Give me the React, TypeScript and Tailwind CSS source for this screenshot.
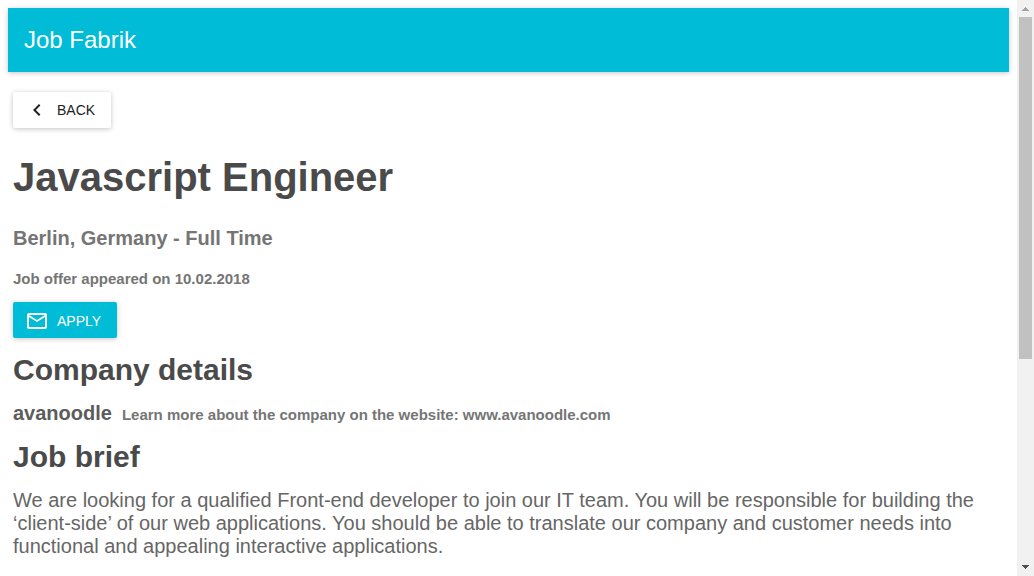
import type { ReactNode } from "react";

function AppBar() {
  return (
    <header className="flex h-16 items-center bg-[#00bcd7] px-4 text-white shadow-[0_1px_6px_rgba(0,0,0,0.12),0_1px_4px_rgba(0,0,0,0.12)]">
      <span className="text-2xl">Job Fabrik</span>
    </header>
  );
}

function SectionTitle({ children }: { children: ReactNode }) {
  return <h2 className="text-[30px] leading-9 font-bold text-[#4a4a4a]">{children}</h2>;
}

function ScrollRail() {
  return (
    <div aria-hidden="true" className="sticky top-0 flex h-screen w-[17px] shrink-0 flex-col items-center bg-[#f1f1f1]">
      <svg className="h-[17px] w-[17px] shrink-0" viewBox="0 0 17 17" fill="#a3a3a3" shapeRendering="crispEdges">
        <path d="M8 7h1v1h1v1h1v1h1v1H5v-1h1V9h1V8h1z" />
      </svg>
      <div className="w-[13px] grow-[342] basis-0 bg-[#c1c1c1]" />
      <div className="grow-[200] basis-0" />
      <svg className="h-[17px] w-[17px] shrink-0" viewBox="0 0 17 17" fill="#505050" shapeRendering="crispEdges">
        <path d="M5 6h7v1h-1v1h-1v1H9v1H8V9H7V8H6V7H5z" />
      </svg>
    </div>
  );
}

export default function App() {
  return (
    <div className="flex min-h-screen items-start bg-white font-['Liberation_Sans',Arial,sans-serif]">
      <div className="min-w-0 flex-1 p-2">
        <AppBar />
        <main className="flex flex-col items-start px-[5px] pt-5">
          <button
            type="button"
            className="flex h-9 items-center gap-2 rounded-xs bg-white pr-4 pl-3 text-sm text-[#212121] uppercase shadow-[0_1px_6px_rgba(0,0,0,0.12),0_1px_4px_rgba(0,0,0,0.12)]"
          >
            <svg className="size-6" viewBox="0 0 24 24" fill="currentColor" aria-hidden="true">
              <path d="M15.41 7.41L14 6l-6 6 6 6 1.41-1.41L10.83 12z" />
            </svg>
            Back
          </button>
          <h1 className="mt-6 text-[40px] leading-[50px] font-bold text-[#4a4a4a]">Javascript Engineer</h1>
          <p className="mt-[22px] text-xl leading-7 font-bold text-[#757575]">Berlin, Germany - Full Time</p>
          <p className="mt-4 text-[15px] leading-[22px] font-bold text-[#757575]">Job offer appeared on 10.02.2018</p>
          <button
            type="button"
            className="mt-3 flex h-9 items-center gap-2 rounded-xs bg-[#00bcd7] pt-0.5 pr-4 pl-3 text-sm text-white uppercase shadow-[0_1px_6px_rgba(0,0,0,0.12),0_1px_4px_rgba(0,0,0,0.12)]"
          >
            <svg className="size-6" viewBox="0 0 24 24" fill="currentColor" aria-hidden="true">
              <path d="M20 4H4c-1.1 0-1.99.9-1.99 2L2 18c0 1.1.9 2 2 2h16c1.1 0 2-.9 2-2V6c0-1.1-.9-2-2-2zm0 14H4V8l8 5 8-5v10zm-8-7L4 6h16l-8 5z" />
            </svg>
            Apply
          </button>
          <section className="mt-3.5">
            <SectionTitle>Company details</SectionTitle>
            <div className="mt-[11px] flex flex-wrap items-baseline gap-x-[10px]">
              <h3 className="text-xl leading-7 font-bold text-[#5c5c5c]">avanoodle</h3>
              <p className="text-[15px] leading-[22px] font-bold text-[#757575]">
                Learn more about the company on the website:{" "}
                <a href="http://www.avanoodle.com">www.avanoodle.com</a>
              </p>
            </div>
          </section>
          <section className="mt-3">
            <SectionTitle>Job brief</SectionTitle>
            <p className="mt-3.5 text-xl leading-[23px] text-[#666]">
              We are looking for a qualified Front-end developer to join our IT team. You will be responsible for
              building the ‘client-side’ of our web applications. You should be able to translate our company and
              customer needs into functional and appealing interactive applications.
            </p>
          </section>
        </main>
      </div>
      <ScrollRail />
    </div>
  );
}
